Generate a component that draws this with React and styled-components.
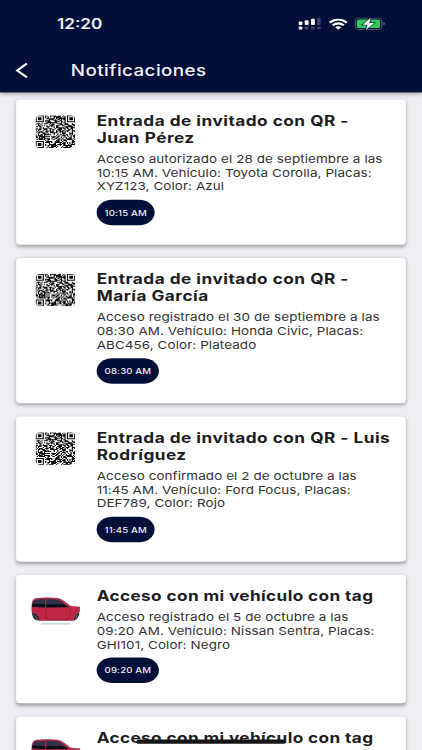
import React from 'react';
import styled, { createGlobalStyle } from 'styled-components';

const GlobalStyle = createGlobalStyle`
  * { box-sizing: border-box; }
  body { margin: 0; background: #edeef3; font-family: Inter, "Liberation Sans", sans-serif; }
`;

const Viewport = styled.div`
  width: 422px;
  height: 750px;
  overflow: hidden;
  background: #edeef3;
`;

/* A 393 x 852 pt phone screen fitted to the viewport. */
const Screen = styled.div`
  position: relative;
  width: 393px;
  height: 852px;
  overflow: hidden;
  display: flex;
  flex-direction: column;
  transform: scale(1.0738, 0.8803);
  transform-origin: 0 0;
`;

const Header = styled.header`
  flex: none;
  height: 105px;
  background: #020f38;
  color: #f3f3fa;
  box-shadow: 0 2px 5px rgba(0, 0, 0, 0.4);
  z-index: 1;
`;

const StatusBar = styled.div`
  height: 54px;
  padding: 0 34px 0 53px;
  display: flex;
  align-items: center;
  justify-content: space-between;
`;

const Clock = styled.span`
  font-size: 16px;
  font-weight: 600;
`;

const StatusIcons = styled.div`
  display: flex;
  align-items: center;
  gap: 6.5px;
  svg { display: block; }
`;

const TitleBar = styled.div`
  height: 51px;
  padding: 0 0 0 14px;
  display: flex;
  align-items: center;
  gap: 40px;
`;

const PageTitle = styled.h1`
  margin: 0;
  font-size: 17.5px;
  font-weight: 500;
  letter-spacing: 0.4px;
`;

const List = styled.main`
  flex: 1;
  padding: 7.5px 15px 0;
  display: flex;
  flex-direction: column;
  gap: 15px;
`;

const Card = styled.article`
  flex: none;
  height: ${(p) => (p.$kind === 'car' ? 146 : 165)}px;
  padding: 15px 8px 0 14px;
  display: flex;
  gap: 15px;
  background: #fff;
  border-radius: 4px;
  box-shadow: 0 2px 4px rgba(0, 0, 0, 0.33);
`;

const Thumb = styled.div`
  flex: none;
  width: 46px;
  padding-top: ${(p) => (p.$kind === 'car' ? 10 : 3.8)}px;
  padding-right: ${(p) => (p.$kind === 'car' ? 0 : 0.5)}px;
  display: flex;
  justify-content: center;
  align-items: flex-start;
`;

const Content = styled.div`
  flex: 1;
`;

const CardTitle = styled.h2`
  margin: 0;
  font-size: 16px;
  line-height: 19.3px;
  font-weight: 700;
  letter-spacing: ${(p) => (p.$kind === 'car' ? 0.36 : 0.47)}px;
  color: #1d1c1f;
  white-space: pre-line;
`;

const CardText = styled.p`
  margin: 7px 0 7px;
  font-size: 12.5px;
  line-height: 15.5px;
  letter-spacing: 0.09px;
  color: #333236;
  white-space: pre-line;
`;

const Chip = styled.span`
  display: inline-flex;
  align-items: center;
  height: 29px;
  padding: 0 7.4px;
  border-radius: 15px;
  background: #020f38;
  color: #eeeef6;
  font-size: 9px;
  font-weight: 500;
  letter-spacing: 0.1px;
`;

const HomeIndicator = styled.div`
  position: absolute;
  left: 127px;
  bottom: 7px;
  width: 139px;
  height: 5px;
  border-radius: 3px;
  background: #151515;
`;

const N = 33;
const isFinder = (x, y) => {
  const spots = [[0, 0], [N - 7, 0], [0, N - 7]];
  for (const [fx, fy] of spots) {
    const dx = x - fx;
    const dy = y - fy;
    if (dx >= -1 && dx <= 7 && dy >= -1 && dy <= 7) {
      const r = Math.max(Math.abs(dx - 3), Math.abs(dy - 3));
      return r === 3 || r <= 1 ? 1 : 0;
    }
  }
  return -1;
};
const qrPath = (() => {
  let seed = 7919;
  const next = () => {
    seed = (Math.imul(seed, 1664525) + 1013904223) >>> 0;
    return seed / 4294967296;
  };
  let d = '';
  for (let y = 0; y < N; y += 1) {
    for (let x = 0; x < N; x += 1) {
      const r = next();
      const f = isFinder(x, y);
      if (f === 1 || (f === -1 && r < 0.58)) d += `M${x} ${y}h1v1h-1z`;
    }
  }
  return d;
})();

const QrCode = () => (
  <svg width="37.2" height="37.2" viewBox={`0 0 ${N} ${N}`}>
    <clipPath id="qr"><rect width={N} height={N} rx="4" /></clipPath>
    <path d={qrPath} fill="#0a0a0a" clipPath="url(#qr)" />
  </svg>
);

const Car = () => (
  <svg width="46" height="33" viewBox="0 0 50 29" preserveAspectRatio="none">
    <path d="M1.2 5Q2 2 5.5 1.5Q16 .3 27 1.4Q30 2 33 4.2L40 9.3L49.3 10.2Q49.6 13 48.6 15.5Q44 17 43 23.6H8.2Q7 17 .9 16.5Q0 11 1.2 5Z" fill="#bd2743" stroke="#8a2440" strokeWidth=".5" />
    <path d="M2.3 4.5Q3 3 6 2.7L14 2.2V10.5L.9 9.7Z" fill="#34304a" />
    <path d="M15.3 2.2Q24 1.8 27.5 2.8Q32 5 37.5 10L15.3 10.2Z" fill="#34304a" />
    <path d="M1.2 7L14 7.4V10.7L.9 9.9ZM15.3 7.4L33 7.6L38.5 10.3L15.3 10.6Z" fill="#090d19" />
    <path d="M14.7 2.4V21Q14.7 22.4 16 22.4H37Q39.6 20 39.8 16V10" fill="none" stroke="#8d1f3a" strokeWidth=".7" />
    <path d="M.9 16.2Q7.4 16.4 8.4 23.6Q4.5 24.2 2.3 21Q.8 18.5 .9 16.2ZM48.8 15.6Q43.8 17 43 23.6Q46 23.4 47.5 20Q48.6 18 48.8 15.6Z" fill="#252532" />
    <path d="M3.2 18.5Q5.6 20 6.2 23.2M46.8 18.3Q45.3 20 44.8 22.8" fill="none" stroke="#8b8e99" strokeWidth=".7" />
    <path d="M10 27H40" stroke="#9ab5c0" strokeWidth=".9" />
  </svg>
);

const Signal = () => (
  <svg width="21" height="14" viewBox="0 0 21 14">
    <g fill="#fff">
      <rect x="0" y="4.3" width="3.6" height="4.2" rx="1" />
      <rect x="5.8" y="3" width="3.6" height="5.5" rx="1" />
      <rect x="11.6" y="1.3" width="3.6" height="7.2" rx="1" />
      <rect x="0" y="10" width="3.6" height="3.5" rx="1" />
    </g>
    <g fill="#3b4365">
      <rect x="17.2" y="0" width="3.4" height="8.5" rx="1" />
      <rect x="5.8" y="10" width="3.6" height="3.5" rx="1" />
      <rect x="11.6" y="10" width="3.6" height="3.5" rx="1" />
      <rect x="17.2" y="10" width="3.4" height="3.5" rx="1" />
    </g>
  </svg>
);

const Wifi = () => (
  <svg width="18" height="13" viewBox="0 0 18 13" fill="none" stroke="#fff" strokeWidth="2.3">
    <path d="M1 4.7Q9 -2.3 17 4.7M3.8 7.8Q9 3.3 14.2 7.8" />
    <path d="M9 12.8L6.2 9.9Q9 7.7 11.8 9.9Z" fill="#fff" stroke="none" />
  </svg>
);

const Battery = () => (
  <svg width="29" height="14" viewBox="0 0 29 14">
    <rect x=".6" y=".6" width="25" height="12.8" rx="4" fill="none" stroke="#5a6280" strokeWidth="1" />
    <rect x="2.2" y="2.2" width="21.8" height="9.6" rx="2.6" fill="#34c759" />
    <path d="M27 5v4Q28.6 8.5 28.6 7T27 5Z" fill="#5a6280" />
    <path d="M15.3 .2L7.5 8H12.2L10.7 13.8L18.6 6H13.9Z" fill="#fff" stroke="#020f38" strokeWidth="1.2" paintOrder="stroke" />
  </svg>
);

const BackIcon = () => (
  <svg width="12" height="18" viewBox="0 0 12 18" fill="none" stroke="#fff" strokeWidth="2.2">
    <path d="M11 1.2L2 9L11 16.8" />
  </svg>
);

const notices = [
  { kind: 'qr', title: 'Entrada de invitado con QR -\nJuan Pérez', text: 'Acceso autorizado el 28 de septiembre a las\n10:15 AM. Vehículo: Toyota Corolla, Placas:\nXYZ123, Color: Azul', time: '10:15 AM' },
  { kind: 'qr', title: 'Entrada de invitado con QR -\nMaría García', text: 'Acceso registrado el 30 de septiembre a las\n08:30 AM. Vehículo: Honda Civic, Placas:\nABC456, Color: Plateado', time: '08:30 AM' },
  { kind: 'qr', title: 'Entrada de invitado con QR - Luis\nRodríguez', text: 'Acceso confirmado el 2 de octubre a las\n11:45 AM. Vehículo: Ford Focus, Placas:\nDEF789, Color: Rojo', time: '11:45 AM' },
  { kind: 'car', title: 'Acceso con mi vehículo con tag', text: 'Acceso registrado el 5 de octubre a las\n09:20 AM. Vehículo: Nissan Sentra, Placas:\nGHI101, Color: Negro', time: '09:20 AM' },
  { kind: 'car', title: 'Acceso con mi vehículo con tag' },
];

export default function App() {
  return (
    <Viewport>
      <GlobalStyle />
      <Screen>
        <Header>
          <StatusBar>
            <Clock>12:20</Clock>
            <StatusIcons><Signal /><Wifi /><Battery /></StatusIcons>
          </StatusBar>
          <TitleBar>
            <BackIcon />
            <PageTitle>Notificaciones</PageTitle>
          </TitleBar>
        </Header>
        <List>
          {notices.map((n, i) => (
            <Card key={i} $kind={n.kind}>
              <Thumb $kind={n.kind}>{n.kind === 'qr' ? <QrCode /> : <Car />}</Thumb>
              <Content>
                <CardTitle $kind={n.kind}>{n.title}</CardTitle>
                {n.text && <CardText>{n.text}</CardText>}
                {n.time && <Chip>{n.time}</Chip>}
              </Content>
            </Card>
          ))}
        </List>
        <HomeIndicator />
      </Screen>
    </Viewport>
  );
}
